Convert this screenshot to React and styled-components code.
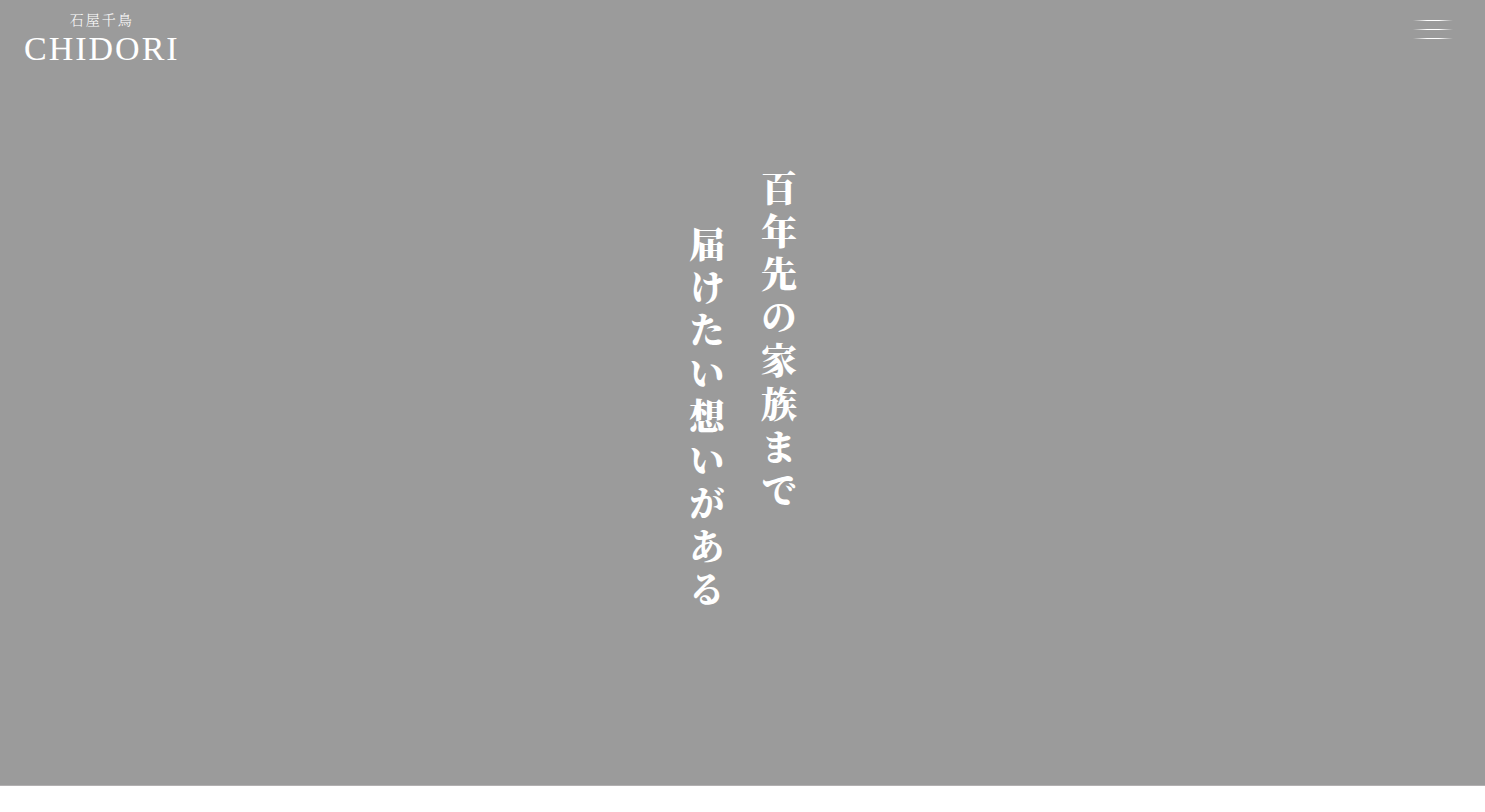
import React from "react";
import styled, { createGlobalStyle } from "styled-components";

const GlobalStyle = createGlobalStyle`
  * {
    box-sizing: border-box;
  }

  body {
    margin: 0;
    background: #ffffff;
    color: #ffffff;
    font-family: "Noto Serif CJK JP", "Liberation Serif", "Noto Sans CJK JP", serif;
  }
`;

const HeroContainer = styled.section`
  display: flex;
  flex-direction: column;
  min-height: calc(100vh - 26px);
  background: #9b9b9b;
  border-bottom: 1px solid #b2b0b1;
`;

const Header = styled.header`
  display: flex;
  align-items: flex-start;
  justify-content: space-between;
  padding: 8px 32px 0 24px;
`;

const Logo = styled.a`
  display: flex;
  flex-direction: column;
  align-items: center;
  color: inherit;
  text-decoration: none;
`;

const LogoKana = styled.span`
  font-size: 14px;
  font-weight: 300;
  line-height: 22px;
  letter-spacing: 2px;
`;

const LogoName = styled.span`
  font-family: "Liberation Serif", serif;
  font-size: 34px;
  line-height: 38px;
  letter-spacing: 2px;
`;

const MenuButton = styled.button`
  display: flex;
  flex-direction: column;
  gap: 8px;
  width: 40px;
  margin: 0;
  padding: 12px 0;
  background: transparent;
  border: 0;
  cursor: pointer;
`;

const MenuLine = styled.span`
  width: 100%;
  height: 1px;
  background: linear-gradient(
    to right,
    transparent,
    #ffffff 35%,
    #ffffff 65%,
    transparent
  );
`;

const HeroBody = styled.main`
  display: flex;
  flex: 1;
  align-items: flex-start;
  justify-content: center;
  padding: 102px 0 160px;
`;

const Heading = styled.h1`
  margin: 0;
  writing-mode: vertical-rl;
  font-size: 36px;
  font-weight: 900;
  line-height: 72px;
  letter-spacing: 0.2em;
`;

const HeadingLine = styled.span`
  display: block;
  padding-top: ${({ $indent }) => ($indent ? "56px" : "0")};
`;

function Hero() {
  return (
    <HeroContainer>
      <Header>
        <Logo href="#">
          <LogoKana lang="ja">石屋千鳥</LogoKana>
          <LogoName>CHIDORI</LogoName>
        </Logo>
        <MenuButton type="button" aria-label="メニュー">
          <MenuLine />
          <MenuLine />
          <MenuLine />
        </MenuButton>
      </Header>

      {/* Vertical catch copy, read from right to left */}
      <HeroBody>
        <Heading lang="ja">
          <HeadingLine>百年先の家族まで</HeadingLine>
          <HeadingLine $indent>届けたい想いがある</HeadingLine>
        </Heading>
      </HeroBody>
    </HeroContainer>
  );
}

function App() {
  return (
    <>
      <GlobalStyle />
      <Hero />
    </>
  );
}

export default App;
